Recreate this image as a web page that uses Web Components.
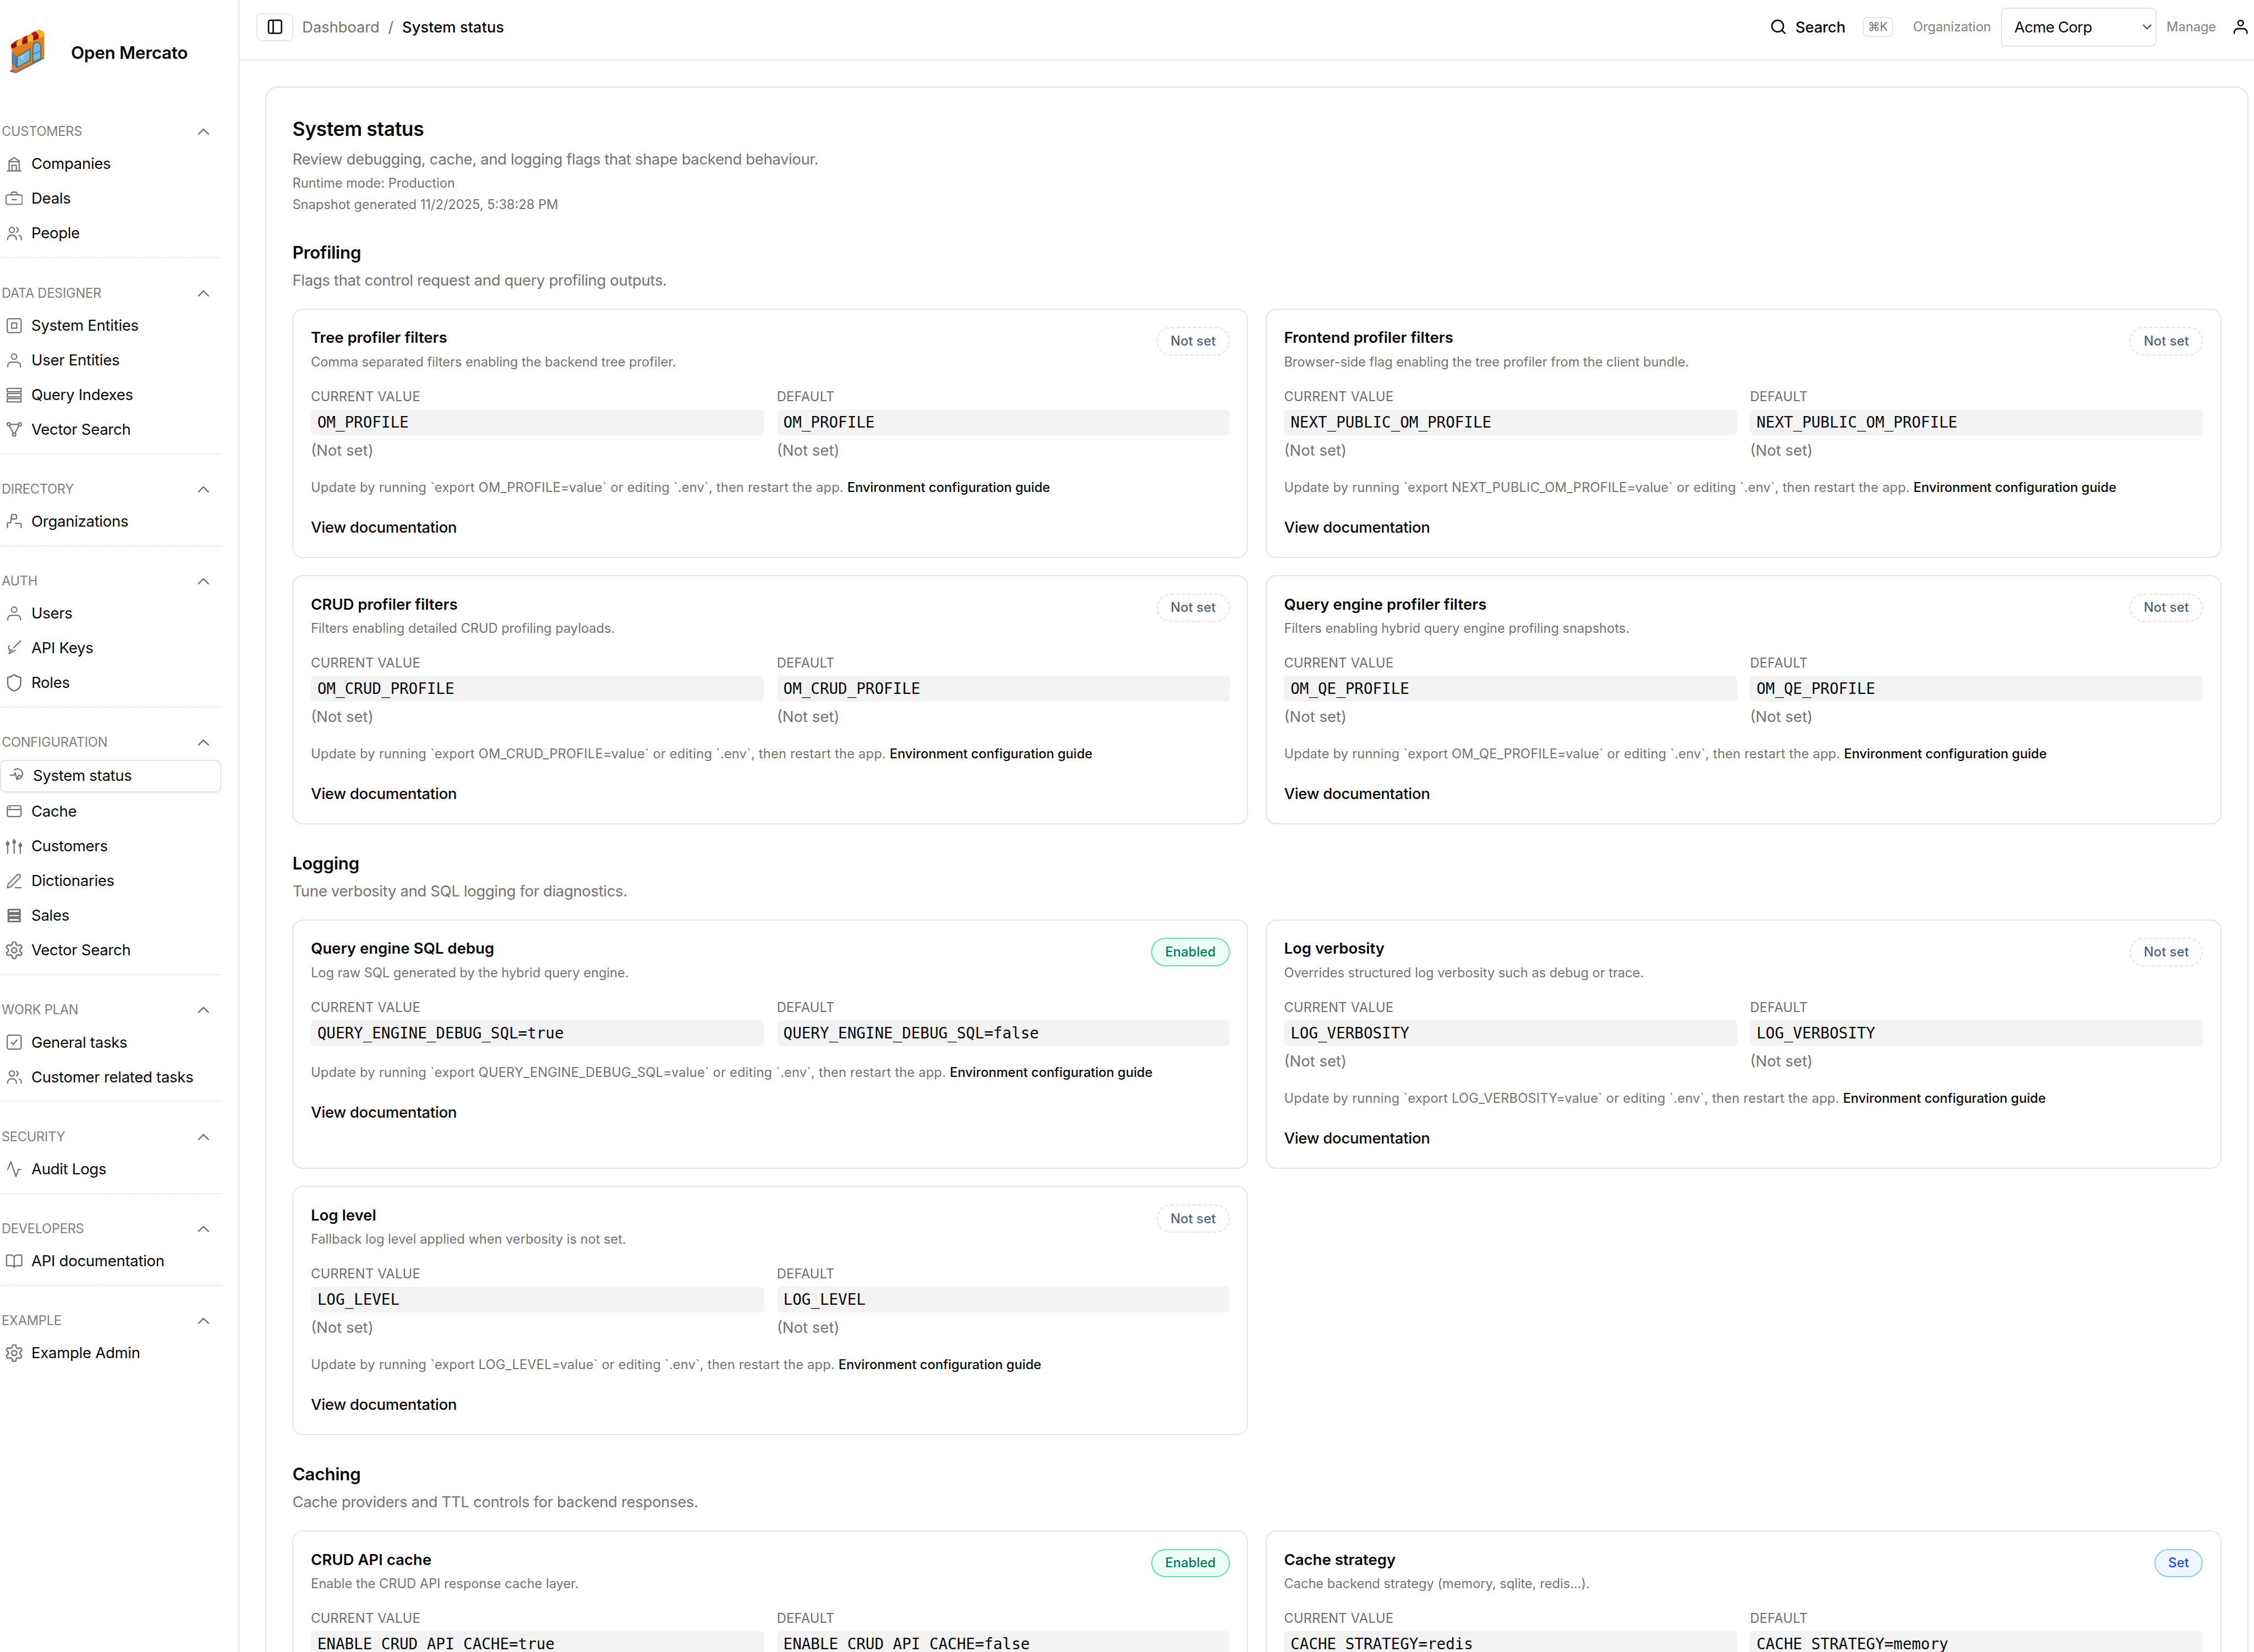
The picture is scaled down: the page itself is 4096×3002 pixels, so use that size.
<!DOCTYPE html>
<html lang="en">
<head>
<meta charset="utf-8">
<title>System status</title>
<style>
html{zoom:calc(4096 / 4162);overflow:hidden;background:#fff}
body{margin:0;font-family:Inter,"Liberation Sans",sans-serif;color:#0a0a0a;background:#fff}
</style>
</head>
<body>
<app-shell>
  <side-nav slot="side">
    <nav-section label="Customers">
      <nav-item icon="building">Companies</nav-item>
      <nav-item icon="briefcase">Deals</nav-item>
      <nav-item icon="users">People</nav-item>
    </nav-section>
    <nav-section label="Data designer">
      <nav-item icon="entity">System Entities</nav-item>
      <nav-item icon="user">User Entities</nav-item>
      <nav-item icon="rows">Query Indexes</nav-item>
      <nav-item icon="vector">Vector Search</nav-item>
    </nav-section>
    <nav-section label="Directory">
      <nav-item icon="org">Organizations</nav-item>
    </nav-section>
    <nav-section label="Auth">
      <nav-item icon="user">Users</nav-item>
      <nav-item icon="key">API Keys</nav-item>
      <nav-item icon="shield">Roles</nav-item>
    </nav-section>
    <nav-section label="Configuration">
      <nav-item icon="status" active>System status</nav-item>
      <nav-item icon="window">Cache</nav-item>
      <nav-item icon="sliders">Customers</nav-item>
      <nav-item icon="pen">Dictionaries</nav-item>
      <nav-item icon="stack">Sales</nav-item>
      <nav-item icon="gear">Vector Search</nav-item>
    </nav-section>
    <nav-section label="Work plan">
      <nav-item icon="check">General tasks</nav-item>
      <nav-item icon="users">Customer related tasks</nav-item>
    </nav-section>
    <nav-section label="Security">
      <nav-item icon="pulse">Audit Logs</nav-item>
    </nav-section>
    <nav-section label="Developers">
      <nav-item icon="book">API documentation</nav-item>
    </nav-section>
    <nav-section label="Example" last>
      <nav-item icon="gear">Example Admin</nav-item>
    </nav-section>
  </side-nav>
  <top-bar slot="top"></top-bar>
  <status-page slot="main">
    <status-section title="Profiling" desc="Flags that control request and query profiling outputs.">
      <flag-card title="Tree profiler filters" desc="Comma separated filters enabling the backend tree profiler." name="OM_PROFILE" status="unset"></flag-card>
      <flag-card title="Frontend profiler filters" desc="Browser-side flag enabling the tree profiler from the client bundle." name="NEXT_PUBLIC_OM_PROFILE" status="unset"></flag-card>
      <flag-card title="CRUD profiler filters" desc="Filters enabling detailed CRUD profiling payloads." name="OM_CRUD_PROFILE" status="unset"></flag-card>
      <flag-card title="Query engine profiler filters" desc="Filters enabling hybrid query engine profiling snapshots." name="OM_QE_PROFILE" status="unset"></flag-card>
    </status-section>
    <status-section title="Logging" desc="Tune verbosity and SQL logging for diagnostics.">
      <flag-card title="Query engine SQL debug" desc="Log raw SQL generated by the hybrid query engine." name="QUERY_ENGINE_DEBUG_SQL" status="enabled" current="true" fallback="false"></flag-card>
      <flag-card title="Log verbosity" desc="Overrides structured log verbosity such as debug or trace." name="LOG_VERBOSITY" status="unset"></flag-card>
      <flag-card title="Log level" desc="Fallback log level applied when verbosity is not set." name="LOG_LEVEL" status="unset"></flag-card>
    </status-section>
    <status-section title="Caching" desc="Cache providers and TTL controls for backend responses.">
      <flag-card title="CRUD API cache" desc="Enable the CRUD API response cache layer." name="ENABLE_CRUD_API_CACHE" status="enabled" current="true" fallback="false" cut></flag-card>
      <flag-card title="Cache strategy" desc="Cache backend strategy (memory, sqlite, redis...)." name="CACHE_STRATEGY" status="set" current="redis" fallback="memory" cut></flag-card>
    </status-section>
  </status-page>
</app-shell>

<script>
const ICONS = {
  building:'<path d="M2.5 21.8h19M5 21.8V8L12 3.5 19 8v13.8M5 9h14M9 21.8V14h6v7.8"/>',
  briefcase:'<rect x=".7" y="7" width="22.6" height="13.2" rx="2.6"/><path d="M8 7V5.2A2 2 0 0 1 10 3.2h4a2 2 0 0 1 2 2V7M9 13.6h6"/>',
  users:'<circle cx="8.8" cy="7.500" r="3.6"/><path d="M3 21v-1.2a5 5 0 0 1 5-5h2a5 5 0 0 1 5 5V21M15.500 4.200a3.800 3.800 0 0 1 0 6.600M19 15a5 5 0 0 1 3 4.600V21"/>',
  entity:'<rect x="2.400" y="2.400" width="19.200" height="19.200" rx="2.600"/><rect x="8.500" y="8.500" width="7" height="7"/>',
  user:'<circle cx="12" cy="6.800" r="3.700"/><path d="M3.200 21v-1.400a5 5 0 0 1 5-5h7.600a5 5 0 0 1 5 5V21"/>',
  rows:'<rect x="2.400" y="3" width="19.200" height="4.600"/><rect x="2.400" y="10" width="19.200" height="4.600"/><rect x="2.400" y="17" width="19.200" height="4.600"/>',
  vector:'<circle cx="4.200" cy="4.600" r="2.200"/><circle cx="19.800" cy="4.600" r="2.200"/><circle cx="12" cy="18.800" r="2.200"/><path d="M6.400 4.600h11.200M5.300 6.500 10.900 16.900M18.700 6.500 13.100 16.900"/>',
  org:'<rect x="8.200" y="2.400" width="7" height="6" rx="1.600"/><path d="M8.800 6 7.400 8v5.600H4a1.500 1.500 0 0 0-1.500 1.500V20.500M14 14.500h6.400a1.200 1.200 0 0 1 1.200 1.200v4.800"/>',
  key:'<path d="M21 2 11.500 11.500M5.200 8.600a5.400 5.400 0 0 0 .6 6.400l3.600-.5M4.500 19.200l9-4M6 16.500l.8 2.500"/>',
  shield:'<path transform="translate(12 12) scale(1.12) translate(-12 -12)" d="M20 13c0 5-3.500 7.500-7.660 8.950a1 1 0 0 1-.67-.01C7.500 20.500 4 18 4 13V6a1 1 0 0 1 1-1c2 0 4.500-1.200 6.240-2.720a1.170 1.170 0 0 1 1.520 0C14.510 3.810 17 5 19 5a1 1 0 0 1 1 1z"/>',
  status:'<path d="M8.500 4a7 7 0 1 1 3 12.400"/><path d="M2.800 11.200h5l1.800-3.400 2.400 9.400 2.600-6.200 3 1.600"/>',
  window:'<rect x="2.400" y="4" width="19.200" height="15" rx="2.600"/><path d="M2.400 9.200h19.200M5.600 6.600h.8"/>',
  sliders:'<path d="M3 22V8M12 22V5M20.500 22V10" /><circle cx="3" cy="8.500" r="1.700" fill="currentColor"/><circle cx="12" cy="6" r="1.700" fill="currentColor"/><circle cx="20.500" cy="10.800" r="1.700" fill="currentColor"/><path d="M3 5.500v1M12 2.500v1M20.500 7.500v1"/>',
  pen:'<path d="M2.600 21.400l1.100-5L16.400 3.700a2.400 2.400 0 0 1 3.600 3.600L7.400 20.200zM13.600 21.400h8"/>',
  stack:'<g stroke-width="2.400"><rect x="4" y="3.800" width="16" height="4.400"/><rect x="4" y="10" width="16" height="4"/><rect x="4" y="15.800" width="16" height="4.400"/></g>',
  gear:'<g transform="translate(12 12) scale(1.16) translate(-12 -12)"><path d="M12.220 2h-.44a2 2 0 0 0-2 2v.18a2 2 0 0 1-1 1.730l-.43.25a2 2 0 0 1-2 0l-.15-.08a2 2 0 0 0-2.730.73l-.22.38a2 2 0 0 0 .73 2.730l.15.1a2 2 0 0 1 1 1.720v.51a2 2 0 0 1-1 1.740l-.15.09a2 2 0 0 0-.73 2.730l.22.38a2 2 0 0 0 2.730.73l.15-.08a2 2 0 0 1 2 0l.43.25a2 2 0 0 1 1 1.730V20a2 2 0 0 0 2 2h.44a2 2 0 0 0 2-2v-.18a2 2 0 0 1 1-1.730l.43-.25a2 2 0 0 1 2 0l.15.08a2 2 0 0 0 2.730-.73l.22-.39a2 2 0 0 0-.73-2.730l-.15-.08a2 2 0 0 1-1-1.740v-.5a2 2 0 0 1 1-1.740l.15-.09a2 2 0 0 0 .73-2.730l-.22-.38a2 2 0 0 0-2.730-.73l-.15.08a2 2 0 0 1-2 0l-.43-.25a2 2 0 0 1-1-1.730V4a2 2 0 0 0-2-2z"/><circle cx="12" cy="12" r="3"/></g>',
  check:'<rect x="2.400" y="2.400" width="19.200" height="19.200" rx="2.400"/><path d="M8 12.200l2.800 3 5.200-6.200"/>',
  pulse:'<path d="M3 12.500 7.500 1.800 14.500 22 18 12l3 .5"/>',
  book:'<path d="M1.500 4.600a1 1 0 0 1 1-1H8a4 4 0 0 1 4 4V21a3 3 0 0 0-3-2.600H2.500a1 1 0 0 1-1-1zM22.500 4.600a1 1 0 0 0-1-1H16a4 4 0 0 0-4 4V21a3 3 0 0 1 3-2.600h6.500a1 1 0 0 0 1-1z"/>',
  panel:'<rect x="3" y="3" width="18" height="18" rx="2.400"/><path d="M9.500 3v18"/>',
  search:'<circle cx="11" cy="11" r="8"/><path d="m21 21-4.300-4.300"/>',
  chevUp:'<path d="M5.200 15.800 12 9l6.800 6.800"/>',
  chevDown:'<path d="m6 9 6 6 6-6"/>'
};
function iconSvg(name, size, sw, color){
  return `<svg width="${size}" height="${size}" viewBox="0 0 24 24" fill="none" stroke="${color||'currentColor'}" stroke-width="${sw||1.7}" stroke-linecap="round" stroke-linejoin="round" style="display:block;flex:none">${ICONS[name]}</svg>`;
}
function shadow(el, html){
  const r = el.attachShadow({mode:'open'});
  r.innerHTML = html;
  return r;
}

class AppShell extends HTMLElement{
  constructor(){super();shadow(this,`<style>
    :host{display:grid;grid-template-columns:442px 1fr;grid-template-rows:112px 1fr;width:4162px;height:3050px;overflow:hidden;background:#fff}
    .side{grid-row:1 / 3;grid-column:1;min-height:0;overflow:hidden}
    .top{grid-row:1;grid-column:2;min-width:0}
    .main{grid-row:2;grid-column:2;min-height:0;min-width:0;overflow:hidden}
  </style>
  <div class="side"><slot name="side"></slot></div>
  <div class="top"><slot name="top"></slot></div>
  <div class="main"><slot name="main"></slot></div>`);}
}
class BrandLogo extends HTMLElement{
  constructor(){
    super();
    const L=(a,b,t)=>[a[0]+(b[0]-a[0])*t,a[1]+(b[1]-a[1])*t];
    let st='';
    for(let i=0;i<6;i++){
      const t0=i/6,t1=(i+1)/6;
      const B0=L([55,94],[186,28],t0),B1=L([55,94],[186,28],t1);
      const F0=L([30,112],[215,45],t0),F1=L([30,112],[215,45],t1);
      const G0=L([33,136],[215,68],t0),G1=L([33,136],[215,68],t1);
      const red=i%2===0;
      st+=`<polygon points="${[B0,B1,F1,F0].join(' ')}" fill="${red?'#bd1420':'#f2b01e'}"/>`;
      st+=`<polygon points="${[F0,F1,G1,G0].join(' ')}" fill="${red?'#8e0f16':'#f7b723'}"/>`;
    }
    shadow(this,`<style>:host{display:block;width:80px;height:100px;flex:none}svg{display:block}</style>
    <svg width="80" height="100" viewBox="0 0 240 300">
      <polygon points="24,256 212,176 216,190 58,272 26,264" fill="#77767f"/>
      <polygon points="35,130 215,50 215,180 56,262 35,250" fill="#e27c25"/>
      <polygon points="35,156 65,180 65,240 35,222" fill="#5b7fa1"/>
      <polygon points="65,180 136,136 136,200 65,240" fill="#79b7d9" stroke="#0f6a66" stroke-width="4"/>
      <path d="M152 210V134q0-34 22-34t22 34v56z" fill="#79b7d9" stroke="#0f6a66" stroke-width="4"/>
      <path d="M152 166l44-18" stroke="#0f6a66" stroke-width="3" fill="none"/>
      <path d="M80 186l22-12M88 196l18-10" stroke="#cfe6f2" stroke-width="4" fill="none"/>
      ${st}
    </svg>`);
  }
}
class SideNav extends HTMLElement{
  constructor(){super();shadow(this,`<style>
    :host{display:block;box-sizing:border-box;width:442px;height:3050px;border-right:2.04px solid #e5e5e5;background:#fff;overflow:hidden}
    .brand{display:flex;align-items:center;gap:41px;padding:45px 0 78px 10px;height:223px;box-sizing:border-box}
    .name{font-size:32px;line-height:48px;font-weight:600;margin-top:4px;letter-spacing:-.3px}
    .nav{margin-left:2px;width:406px;display:block}
    </style>
    <div class="brand"><brand-logo></brand-logo><div class="name">Open Mercato</div></div>
    <div class="nav"><slot></slot></div>`);}
}
class NavSection extends HTMLElement{
  constructor(){super();
    const last=this.hasAttribute('last');
    shadow(this,`<style>
    :host{display:block;margin-bottom:${last?0:44}px}
    .head{display:flex;align-items:center;justify-content:space-between;height:40px;padding-right:16px;color:#808080;font-size:24px;line-height:32px;text-transform:uppercase;letter-spacing:-.25px;margin-left:1px}
    .items{display:flex;flex-direction:column;gap:8px;margin-top:12px}
    .div{margin-top:16px;border-top:2.04px dotted #e5e5e5;${last?'display:none':''}}
    </style>
    <div class="head"><span>${this.getAttribute('label')}</span>${iconSvg('chevUp',32,1.9,'#737373')}</div>
    <div class="items"><slot></slot></div>
    <div class="div"></div>`);
  }
}
class NavItem extends HTMLElement{
  constructor(){super();
    const a=this.hasAttribute('active');
    shadow(this,`<style>
    :host{display:flex;align-items:center;gap:${a?14:16}px;box-sizing:border-box;font-size:28px;line-height:40px;color:#0a0a0a;letter-spacing:-.3px;
      ${a?'height:60px;margin-left:-2px;width:408px;padding-left:13px;border:2.04px solid #e5e5e5;border-radius:10px;background:#fff;box-shadow:0 2px 4px rgba(0,0,0,.06);':'height:56px;padding-left:8px;'}}
    .i{color:#737373;display:block;flex:none}
    </style>
    <span class="i">${iconSvg(this.getAttribute('icon'),32)}</span><slot></slot>`);
  }
}
class TopBar extends HTMLElement{
  constructor(){super();shadow(this,`<style>
    :host{display:flex;align-items:center;box-sizing:border-box;height:112px;padding:14px 9px 24px 32px;border-bottom:2.04px solid #e5e5e5;background:#fff;font-size:28px;line-height:40px}
    .toggle{box-sizing:border-box;width:68px;height:52px;border:2.04px solid #e5e5e5;border-radius:10px;display:flex;align-items:center;justify-content:center;color:#0a0a0a;margin-right:16px}
    .crumb{color:#737373;letter-spacing:-.2px}
    .sep{color:#737373;margin:0 16px}
    .cur{color:#0a0a0a;font-weight:500;letter-spacing:-.1px}
    .spacer{flex:1}
    .search{display:flex;align-items:center;gap:16px;font-weight:500;color:#0a0a0a;margin-right:32px;letter-spacing:-.3px}
    .kbd{box-sizing:border-box;width:56px;height:36px;border:2.04px solid #e5e5e5;border-radius:8px;display:flex;align-items:center;justify-content:center;font-size:22px;line-height:28px;color:#737373;margin-right:37px}
    .lbl{font-size:24px;line-height:32px;color:#808080}
    .sel{box-sizing:border-box;width:288px;height:72px;border:2.04px solid #e5e5e5;border-radius:10px;display:flex;align-items:center;justify-content:space-between;padding:0 2px 0 23px;margin:0 18px;letter-spacing:-.7px}
    .user{margin-left:29px;color:#0a0a0a}
    </style>
    <div class="toggle">${iconSvg('panel',32,2)}</div>
    <span class="crumb">Dashboard</span><span class="sep">/</span><span class="cur">System status</span>
    <span class="spacer"></span>
    <span class="search">${iconSvg('search',32,2)}<span>Search</span></span>
    <span class="kbd">⌘K</span>
    <span class="lbl">Organization</span>
    <div class="sel"><span>Acme Corp</span>${iconSvg('chevDown',28,1.4)}</div>
    <span class="lbl">Manage</span>
    <span class="user">${iconSvg('user',32,2)}</span>`);}
}
class StatusPage extends HTMLElement{
  constructor(){super();shadow(this,`<style>
    :host{display:block;box-sizing:border-box;padding:48px 10px 0 48px}
    .card{box-sizing:border-box;border:2.04px solid #e5e5e5;border-radius:24px;padding:48px;background:#fff}
    h1{margin:0;font-size:36px;line-height:56px;font-weight:600;color:#0a0a0a;letter-spacing:-.35px}
    p{margin:8px 0 0;color:#737373}
    .d{font-size:28px;line-height:40px;letter-spacing:-.4px}
    .s{font-size:24px;line-height:32px}
    </style>
    <div class="card">
      <h1>System status</h1>
      <p class="d">Review debugging, cache, and logging flags that shape backend behaviour.</p>
      <p class="s">Runtime mode: Production</p>
      <p class="s">Snapshot generated 11/2/2025, 5:38:28 PM</p>
      <slot></slot>
    </div>`);}
}
class StatusSection extends HTMLElement{
  constructor(){super();shadow(this,`<style>
    :host{display:block;margin-top:48px}
    h2{margin:0;font-size:32px;line-height:48px;font-weight:600;color:#0a0a0a;letter-spacing:-.3px}
    p{margin:8px 0 0;font-size:28px;line-height:40px;color:#737373;letter-spacing:-.37px}
    .grid{display:grid;grid-template-columns:minmax(0,1fr) minmax(0,1fr);gap:32px;margin-top:32px}
    </style>
    <h2>${this.getAttribute('title')}</h2>
    <p>${this.getAttribute('desc')}</p>
    <div class="grid"><slot></slot></div>`);}
}
class StatusBadge extends HTMLElement{
  constructor(){super();
    const k=this.getAttribute('kind');
    const v={unset:['#fff','#dde4ef','#526079','dashed','Not set'],enabled:['#ecfdf5','#5fe3ad','#047857','solid','Enabled'],set:['#eff6ff','#93c5fd','#1d4ed8','solid','Set']}[k];
    shadow(this,`<style>
    :host{display:block;flex:none;box-sizing:border-box;height:52px;padding:8px 24px;border:2.04px ${v[3]} ${v[1]};border-radius:999px;background:${v[0]};color:${v[2]};font-size:24px;line-height:32px;font-weight:500;letter-spacing:.15px}
    </style>${v[4]}`);
  }
}
class FlagCard extends HTMLElement{
  constructor(){super();
    const g=n=>this.getAttribute(n);
    const name=g('name'), cur=g('current'), def=g('fallback');
    const code=v=>v===null?name:`${name}=${v}`;
    const ns=v=>v===null?'<div class="ns">(Not set)</div>':'';
    const foot=this.hasAttribute('cut')?'':`
      <p class="up">Update by running \`export ${name}=value\` or editing \`.env\`, then restart the app. <b>Environment configuration guide</b></p>
      <div class="doc">View documentation</div>`;
    shadow(this,`<style>
    :host{display:block;box-sizing:border-box;min-width:0;height:460px;border:2.04px solid #e5e5e5;border-radius:20px;padding:32px;background:#fff}
    .head{display:flex;justify-content:space-between;align-items:flex-start;gap:16px}
    h3{margin:0;font-size:28px;line-height:40px;font-weight:600;color:#0a0a0a}
    .desc{margin:8px 0 0;font-size:24px;line-height:32px;color:#737373}
    .vals{display:grid;grid-template-columns:minmax(0,1fr) minmax(0,1fr);gap:24px;margin-top:32px}
    .lab{font-size:24px;line-height:32px;color:#6e6e6e;text-transform:uppercase;letter-spacing:.3px}
    code{display:block;box-sizing:border-box;margin-top:8px;height:48px;padding:4px 12px;border-radius:8px;background:#f3f3f3;font-family:"DejaVu Sans Mono","Liberation Mono",monospace;font-size:28px;line-height:40px;color:#0a0a0a;white-space:nowrap;overflow:hidden}
    .ns{margin-top:8px;font-size:28px;line-height:40px;color:#737373}
    .up{margin:32px 0 0;font-size:24px;line-height:32px;color:#737373;letter-spacing:.22px}
    b{font-weight:500;color:#0a0a0a;letter-spacing:0}
    .doc{margin-top:38px;font-size:28px;line-height:40px;font-weight:500;color:#0a0a0a;letter-spacing:-.3px}
    </style>
    <div class="head"><div><h3>${g('title')}</h3><p class="desc">${g('desc')}</p></div><status-badge kind="${g('status')}"></status-badge></div>
    <div class="vals">
      <div><div class="lab">Current value</div><code>${code(cur)}</code>${ns(cur)}</div>
      <div><div class="lab">Default</div><code>${code(def)}</code>${ns(def)}</div>
    </div>${foot}`);
  }
}
customElements.define('app-shell',AppShell);
customElements.define('brand-logo',BrandLogo);
customElements.define('side-nav',SideNav);
customElements.define('nav-section',NavSection);
customElements.define('nav-item',NavItem);
customElements.define('top-bar',TopBar);
customElements.define('status-badge',StatusBadge);
customElements.define('status-page',StatusPage);
customElements.define('status-section',StatusSection);
customElements.define('flag-card',FlagCard);
</script>
</body>
</html>
